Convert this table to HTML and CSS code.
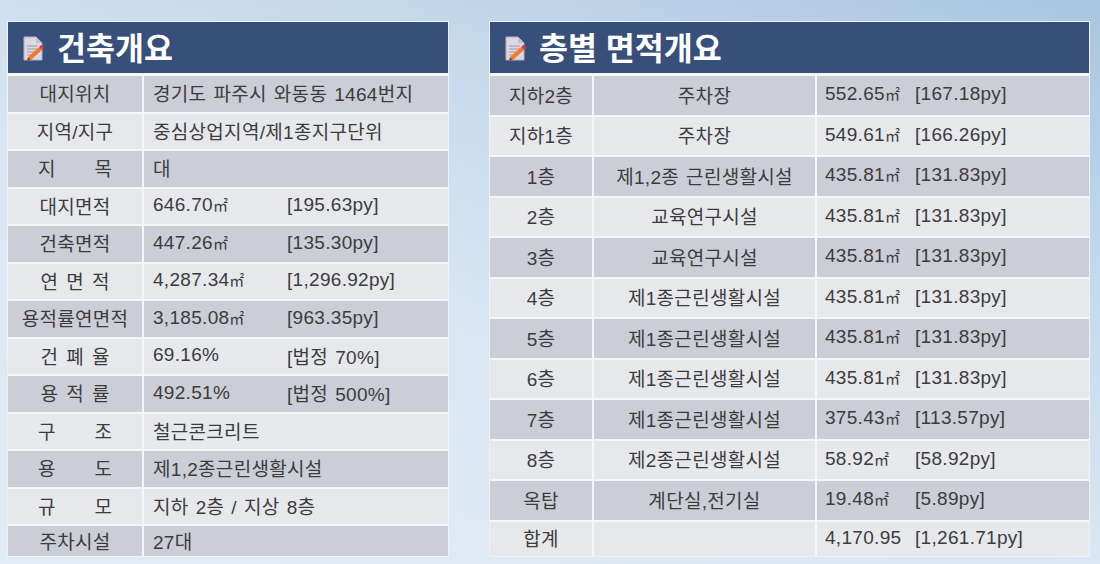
FILE: index.html
```html
<!DOCTYPE html>
<html lang="ko">
<head>
<meta charset="utf-8">
<title>건축개요</title>
<link rel="stylesheet" href="styles.css">
</head>
<body>
<div class="page">
  <section class="panel left">
    <div class="head">
      <svg class="ico" width="22" height="25" viewBox="0 0 22 25">
        <path d="M1 1 H13 L19 7 V24 H1 Z" fill="#dcd7e4" stroke="#b4aec2" stroke-width="1"/>
        <path d="M13 1 V7 H19 Z" fill="#c3bdd0"/>
        <path d="M4 10 H15 M4 13 H15 M4 16 H12 M4 19 H9" stroke="#9f99ad" stroke-width="1.2"/>
        <path d="M6 23 L17.5 12.5" stroke="#f07a26" stroke-width="4.2" stroke-linecap="butt"/>
        <path d="M17.5 12.5 L20 10.2" stroke="#e2363c" stroke-width="4.2"/>
        <path d="M4.3 24.6 L5 21.4 L7.6 24 Z" fill="#7a3a1a"/>
      </svg>
      <h1>건축개요</h1>
    </div>
    <div class="body">
      <div class="row dk"><div class="lab">대지위치</div><div class="val">경기도 파주시 와동동 1464번지</div></div>
      <div class="row lt"><div class="lab">지역/지구</div><div class="val">중심상업지역/제1종지구단위</div></div>
      <div class="row dk"><div class="lab"><span class="sp w4"><span>지</span><span>목</span></span></div><div class="val">대</div></div>
      <div class="row lt"><div class="lab">대지면적</div><div class="val"><span class="a">646.70<span class="u">㎡</span></span>[195.63py]</div></div>
      <div class="row dk"><div class="lab">건축면적</div><div class="val"><span class="a">447.26<span class="u">㎡</span></span>[135.30py]</div></div>
      <div class="row lt"><div class="lab"><span class="sp w3"><span>연</span><span>면</span><span>적</span></span></div><div class="val"><span class="a">4,287.34<span class="u">㎡</span></span>[1,296.92py]</div></div>
      <div class="row dk"><div class="lab">용적률연면적</div><div class="val"><span class="a">3,185.08<span class="u">㎡</span></span>[963.35py]</div></div>
      <div class="row lt"><div class="lab"><span class="sp w3"><span>건</span><span>폐</span><span>율</span></span></div><div class="val"><span class="a">69.16%</span>[법정 70%]</div></div>
      <div class="row dk"><div class="lab"><span class="sp w3"><span>용</span><span>적</span><span>률</span></span></div><div class="val"><span class="a">492.51%</span>[법정 500%]</div></div>
      <div class="row lt"><div class="lab"><span class="sp w4"><span>구</span><span>조</span></span></div><div class="val">철근콘크리트</div></div>
      <div class="row dk"><div class="lab"><span class="sp w4"><span>용</span><span>도</span></span></div><div class="val">제1,2종근린생활시설</div></div>
      <div class="row lt"><div class="lab"><span class="sp w4"><span>규</span><span>모</span></span></div><div class="val">지하 2층 / 지상 8층</div></div>
      <div class="row dk last"><div class="lab">주차시설</div><div class="val">27대</div></div>
    </div>
  </section>

  <section class="panel right">
    <div class="head">
      <svg class="ico" width="22" height="25" viewBox="0 0 22 25">
        <path d="M1 1 H13 L19 7 V24 H1 Z" fill="#dcd7e4" stroke="#b4aec2" stroke-width="1"/>
        <path d="M13 1 V7 H19 Z" fill="#c3bdd0"/>
        <path d="M4 10 H15 M4 13 H15 M4 16 H12 M4 19 H9" stroke="#9f99ad" stroke-width="1.2"/>
        <path d="M6 23 L17.5 12.5" stroke="#f07a26" stroke-width="4.2" stroke-linecap="butt"/>
        <path d="M17.5 12.5 L20 10.2" stroke="#e2363c" stroke-width="4.2"/>
        <path d="M4.3 24.6 L5 21.4 L7.6 24 Z" fill="#7a3a1a"/>
      </svg>
      <h1>층별 면적개요</h1>
    </div>
    <div class="body">
      <div class="row dk"><div class="c1">지하2층</div><div class="c2">주차장</div><div class="c3"><span class="b">552.65<span class="u">㎡</span></span>[167.18py]</div></div>
      <div class="row lt"><div class="c1">지하1층</div><div class="c2">주차장</div><div class="c3"><span class="b">549.61<span class="u">㎡</span></span>[166.26py]</div></div>
      <div class="row dk"><div class="c1">1층</div><div class="c2">제1,2종 근린생활시설</div><div class="c3"><span class="b">435.81<span class="u">㎡</span></span>[131.83py]</div></div>
      <div class="row lt"><div class="c1">2층</div><div class="c2">교육연구시설</div><div class="c3"><span class="b">435.81<span class="u">㎡</span></span>[131.83py]</div></div>
      <div class="row dk"><div class="c1">3층</div><div class="c2">교육연구시설</div><div class="c3"><span class="b">435.81<span class="u">㎡</span></span>[131.83py]</div></div>
      <div class="row lt"><div class="c1">4층</div><div class="c2">제1종근린생활시설</div><div class="c3"><span class="b">435.81<span class="u">㎡</span></span>[131.83py]</div></div>
      <div class="row dk"><div class="c1">5층</div><div class="c2">제1종근린생활시설</div><div class="c3"><span class="b">435.81<span class="u">㎡</span></span>[131.83py]</div></div>
      <div class="row lt"><div class="c1">6층</div><div class="c2">제1종근린생활시설</div><div class="c3"><span class="b">435.81<span class="u">㎡</span></span>[131.83py]</div></div>
      <div class="row dk"><div class="c1">7층</div><div class="c2">제1종근린생활시설</div><div class="c3"><span class="b">375.43<span class="u">㎡</span></span>[113.57py]</div></div>
      <div class="row lt"><div class="c1">8층</div><div class="c2">제2종근린생활시설</div><div class="c3"><span class="b">58.92<span class="u">㎡</span></span>[58.92py]</div></div>
      <div class="row dk"><div class="c1">옥탑</div><div class="c2">계단실,전기실</div><div class="c3"><span class="b">19.48<span class="u">㎡</span></span>[5.89py]</div></div>
      <div class="row lt last"><div class="c1">합계</div><div class="c2"></div><div class="c3"><span class="b">4,170.95</span>[1,261.71py]</div></div>
    </div>
  </section>
</div>
</body>
</html>
```
FILE: styles.css
```css
html, body {
  margin: 0;
  padding: 0;
}
body {
  width: 1100px;
  height: 564px;
  overflow: hidden;
  background: linear-gradient(200deg, #a9c5df 0%, #c6daec 30%, #dbe7f3 60%, #e2ecf6 100%);
  font-family: "Liberation Sans", "Noto Sans CJK KR", sans-serif;
  color: #3c3c3c;
}
.page {
  display: flex;
  gap: 40px;
  padding: 21px 0 0 7px;
}
.panel {
  display: flex;
  flex-direction: column;
  height: 536px;
  background: #f4f6f9;
  border: 1px solid #eef2f7;
  box-sizing: border-box;
  overflow: hidden;
}
.left { width: 442px; }
.right { width: 601px; }
.head {
  height: 51px;
  flex: none;
  background: #385079;
  display: flex;
  align-items: center;
  padding-left: 15px;
  gap: 13px;
}
.ico { display: block; margin-top: 2px; }
.head h1 {
  margin: 0 0 0 -1px;
  font-family: "Noto Sans CJK KR", sans-serif;
  font-weight: 700;
  font-size: 31.5px;
  color: #ffffff;
  letter-spacing: 0;
  line-height: 1;
  padding-bottom: 1px;
}
.body {
  margin-top: 3px;
  flex: 1;
  display: flex;
  flex-direction: column;
  gap: 2px;
  min-height: 0;
}
.row {
  display: grid;
  gap: 2px;
  font-size: 19px;
  letter-spacing: 0.3px;
  word-spacing: 1.5px;
  flex: none;
}
.left .row {
  grid-template-columns: 134px 1fr;
  height: 35.5px;
}
.right .row {
  grid-template-columns: 102px 221px 1fr;
  height: 38.5px;
}
.row.last { flex: 1; height: auto; }
.row > div {
  display: flex;
  align-items: center;
  white-space: nowrap;
  padding-bottom: 2px;
  box-sizing: border-box;
}
.dk > div { background: #cbced6; }
.lt > div { background: #e7e8ec; }
.lab, .c1, .c2 { justify-content: center; }
.val { padding-left: 9px; }
.c3 { padding-left: 8px; }
.a { display: inline-block; width: 134px; }
.b { display: inline-block; width: 90px; }
.u { font-size: 15px; letter-spacing: 0; }
.sp {
  display: inline-flex;
  justify-content: space-between;
  letter-spacing: 0;
}
.sp.w4 { width: 74px; }
.sp.w3 { width: 69px; }
```
